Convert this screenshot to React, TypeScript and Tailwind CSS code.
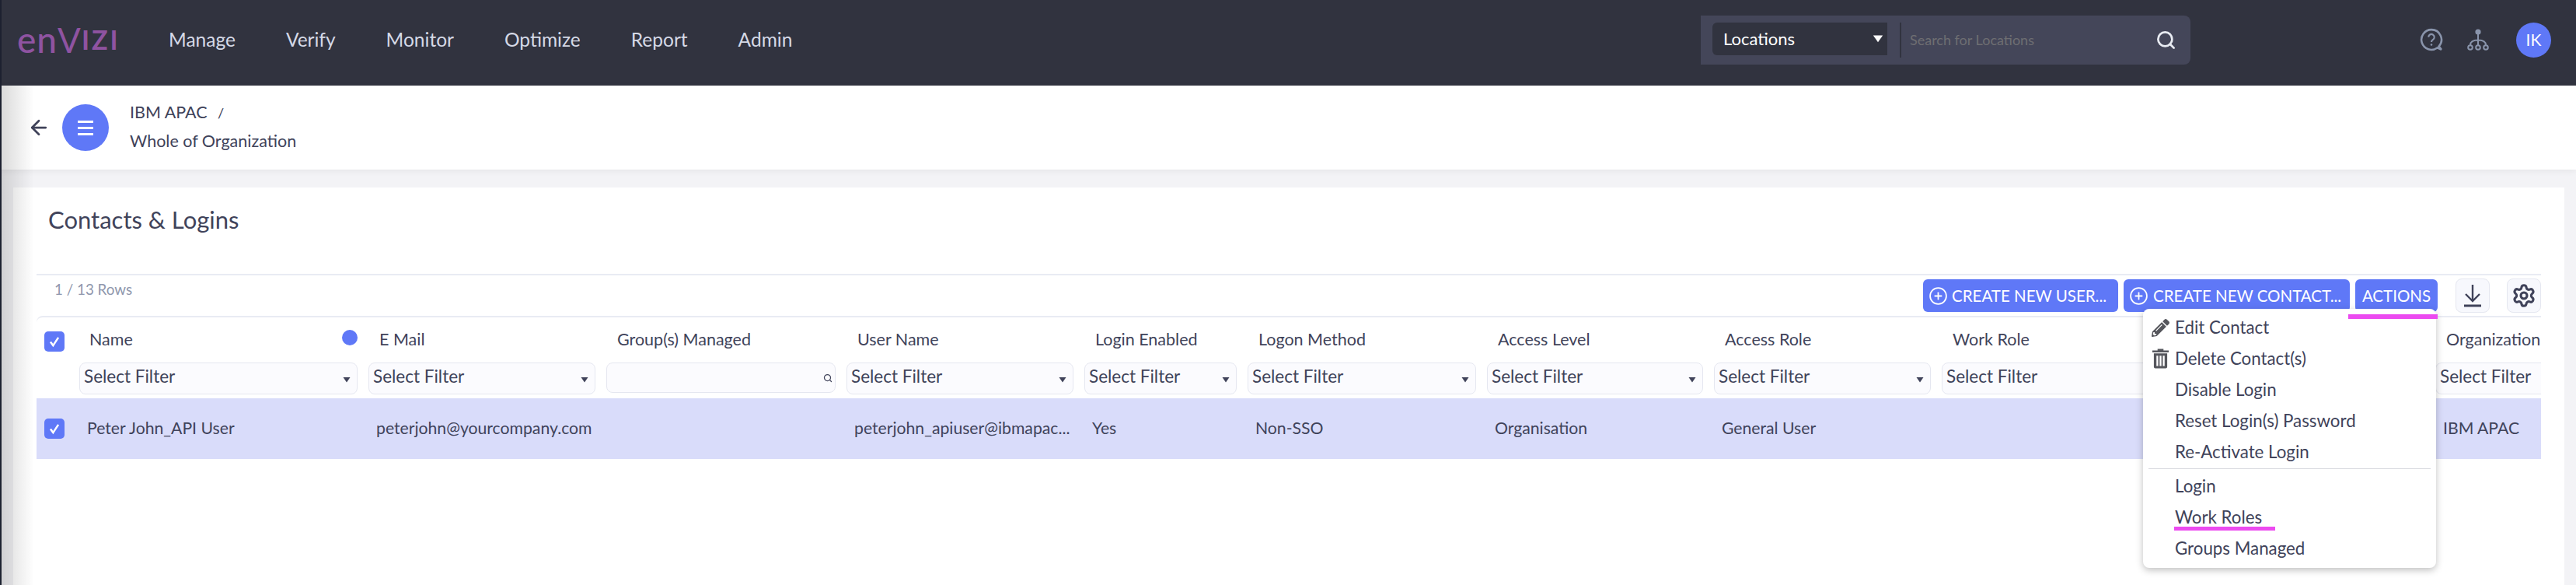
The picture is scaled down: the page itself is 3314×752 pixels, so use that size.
import { ArrowLeft, CirclePlus, Search, Settings } from "lucide-react"
import { FaPencilAlt } from "react-icons/fa"

const GRID = "grid grid-cols-[48px_372px_306px_309px_306px_210px_308px_292px_293px_309px_326px_260px]"

const nav = ["Manage", "Verify", "Monitor", "Optimize", "Report", "Admin"]

const columns = ["Group(s) Managed", "User Name", "Login Enabled", "Logon Method", "Access Level", "Access Role", "Work Role", "", "Organization"]

const rowValues = ["peterjohn@yourcompany.com", "", "peterjohn_apiuser@ibmapac...", "Yes", "Non-SSO", "Organisation", "General User", "", "", "IBM APAC"]

function Caret({ className }: { className: string }) {
  return (
    <svg viewBox="0 0 10 8" className={className} fill="currentColor">
      <path d="M0.5 1h9L5 7.5z" />
    </svg>
  )
}

function Check() {
  return (
    <span className="flex h-[26px] w-[26px] items-center justify-center rounded-[5px] bg-[#5f78f7]">
      <svg viewBox="0 0 16 16" className="h-[18px] w-[18px]" fill="none" stroke="white" strokeWidth="2.2">
        <path d="M3.5 8.5l3 4 6-9" />
      </svg>
    </span>
  )
}

function Filter() {
  return (
    <div className="flex h-[41px] items-center justify-between rounded-[8px] border border-[#e5e7f0] bg-[#fbfbfe] pr-[8px] pl-[5px] text-[#40435a]">
      <span className="-mt-[5px] text-[22.5px] whitespace-nowrap">Select Filter</span>
      <Caret className="mt-[2px] h-[8px] w-[10px] shrink-0" />
    </div>
  )
}

function SearchFilter() {
  return (
    <div className="flex h-[39px] items-center justify-end rounded-[8px] border border-[#e5e7f0] bg-[#fbfbfe] pr-[3px] text-[#40435a]">
      <Search size={12} strokeWidth={2.5} />
    </div>
  )
}

function TrashIcon() {
  return (
    <svg viewBox="0 0 22 26" className="h-[26px] w-[21px] text-[#55565c]" fill="currentColor">
      <path d="M7 0h8v2h7v2.5H0V2h7z" />
      <path d="M2 6h18v18a2 2 0 0 1-2 2H4a2 2 0 0 1-2-2zM5.500 9v14h2.400V9zm4.300 0v14h2.400V9zm4.300 0v14h2.400V9z" fillRule="evenodd" />
    </svg>
  )
}

function MenuItem({ icon, label }: { icon?: React.ReactNode; label: string }) {
  return (
    <div className="relative flex h-[40px] items-center pl-[41px] text-[22.3px] whitespace-nowrap text-[#40435a]">
      {icon && <span className="absolute left-[10px] flex w-[24px] justify-center">{icon}</span>}
      {label}
    </div>
  )
}

export default function App() {
  return (
    <div className="relative h-[752px] w-[3314px] overflow-hidden bg-[#f3f3f6] font-['Lato',sans-serif] text-[21.5px] text-[#40435a]">

      {/* TOP NAV */}
      <header className="flex h-[110px] items-center bg-[#31333f] pb-[8px] pl-[22px]">
        <div className="flex h-[50px] w-[195px] items-center leading-none text-[#8f53a1]">
          <span className="text-[46px] font-medium tracking-[1px]">en</span>
          <span className="text-[44px]">V</span>
          <span className="ml-[1px] text-[34px] font-bold tracking-[3px]">IZI</span>
        </div>
        <nav className="flex gap-[65px] text-[24.500px] text-[#d5d9e6]">
          {nav.map((n) => (
            <span key={n}>{n}</span>
          ))}
        </nav>

        <div className="ml-auto flex h-[63px] w-[630px] items-start rounded-r-[8px] bg-[#444659] pt-[9px] pl-[15px]">
          <div className="flex h-[42px] w-[225px] items-center justify-between rounded-l-[6px] bg-[#31333f] pr-[5px] pl-[14px] text-[22px] text-white">
            Locations
            <Caret className="h-[11px] w-[14px]" />
          </div>
          <div className="ml-[16px] h-[45px] w-[2px] bg-[#31333f]" />
          <div className="flex h-[45px] flex-1 items-center justify-between pr-[18px] pl-[11px] text-[#6e6e72]">
            <span className="text-[18px]">Search for Locations</span>
            <Search size={27} strokeWidth={2.4} className="text-[#e8ebf2]" />
          </div>
        </div>

        <div className="ml-[295px] flex items-center pr-[32px]">
          <svg viewBox="0 0 28 28" className="h-[30px] w-[30px] text-[#8994ab]" fill="none" stroke="currentColor" strokeWidth="2.400">
            <path d="M14 2a12 12 0 1 0 7 21.750L26 26l-3-4A12 12 0 0 0 14 2z" />
            <path d="M10.500 11a3.500 3.500 0 1 1 5.400 2.900c-1.300 .9-1.900 1.500-1.900 2.800" strokeWidth="2" />
            <circle cx="14" cy="20" r="1.200" fill="currentColor" stroke="none" />
          </svg>
          <svg viewBox="0 0 28 28" className="ml-[31px] h-[28px] w-[28px] text-[#8994ab]" fill="none" stroke="currentColor" strokeWidth="2">
            <circle cx="14" cy="4" r="3.600" fill="currentColor" stroke="none" />
            <path d="M14 7v14M4 21c0-5 4-6.500 10-6.500S24 16 24 21" />
            <circle cx="4" cy="24" r="2.800" />
            <circle cx="14" cy="24" r="2.800" />
            <circle cx="24" cy="24" r="2.800" />
          </svg>
          <div className="ml-[35px] flex h-[45px] w-[45px] items-center justify-center rounded-full bg-[#5f78f7] text-[21px] text-white">IK</div>
        </div>
      </header>

      {/* BREADCRUMB */}
      <div className="flex h-[108px] items-center bg-white pl-[35px] shadow-[0_2px_8px_rgba(0,0,0,0.06)]">
        <ArrowLeft size={30} strokeWidth={2.2} className="text-[#40435a]" />
        <div className="ml-[15px] flex h-[60px] w-[60px] flex-col items-center justify-center gap-[5px] rounded-full bg-[#5f78f7]">
          <span className="h-[3px] w-[20px] bg-white" />
          <span className="h-[3px] w-[20px] bg-white" />
          <span className="h-[3px] w-[20px] bg-white" />
        </div>
        <div className="-mt-[3px] ml-[27px] flex flex-col gap-[12px] text-[21.500px] leading-[24px]">
          <span>
            IBM APAC <span className="ml-[8px] text-[18px]">/</span>
          </span>
          <span>Whole of Organization</span>
        </div>
      </div>

      {/* CARD */}
      <main className="mt-[23px] mr-[15px] ml-[17px] h-[520px] bg-white px-[30px] pt-[22px]">
        <h1 className="pl-[15px] text-[31px] leading-[38px]">Contacts &amp; Logins</h1>

        <div className="relative mt-[51px]">
          {/* toolbar */}
          <div className="flex h-[54px] items-start justify-between border-t-2 border-[#e9ebf3]">
            <span className="mt-[4px] ml-[23px] text-[18.800px] text-[#8f97ad]">1 / 13 Rows</span>
            <div className="mt-[4px] flex items-center text-[20.500px] text-white">
              <button className="flex h-[42px] w-[251px] items-center gap-[5px] rounded-[6px] bg-[#5f78f7] pl-[7px] whitespace-nowrap">
                <CirclePlus size={25} strokeWidth={1.7} />
                CREATE NEW USER...
              </button>
              <button className="ml-[7px] flex h-[42px] w-[291px] items-center gap-[6px] rounded-[6px] bg-[#5f78f7] pl-[7px] whitespace-nowrap">
                <CirclePlus size={25} strokeWidth={1.7} />
                CREATE NEW CONTACT...
              </button>
              <button className="ml-[7px] h-[42px] w-[106px] rounded-[6px] bg-[#5f78f7]">ACTIONS</button>
              <button className="ml-[23px] flex h-[44px] w-[44px] items-center justify-center rounded-[8px] border border-[#e5e7f0] bg-[#f7f8fd] text-[#40435a]">
                <svg viewBox="0 0 24 30" className="h-[30px] w-[24px]" fill="none" stroke="currentColor" strokeWidth="2.4">
                  <path d="M12 1v20M3 13l9 9 9-9" />
                  <path d="M1 28h22" strokeWidth="3" />
                </svg>
              </button>
              <button className="ml-[22px] flex h-[44px] w-[44px] items-center justify-center rounded-[8px] border border-[#e5e7f0] bg-[#f7f8fd] text-[#40435a]">
                <Settings size={32} strokeWidth={2.3} />
              </button>
            </div>
          </div>

          {/* table */}
          <div className="overflow-hidden rounded-tl-[8px] border-t-2 border-[#e9ebf3]">
            <div className={`${GRID} h-[104px]`}>
              <div className="pt-[18px] pl-[10px]">
                <Check />
              </div>
              <div className="px-[7px]">
                <div className="flex h-[58px] items-start justify-between pt-[12px] pl-[13px]">
                  <span>Name</span>
                  <span className="mt-[4px] h-[20px] w-[20px] rounded-full bg-[#5f78f7]" />
                </div>
                <Filter />
              </div>
              <div className="px-[7px]">
                <div className="h-[58px] pt-[12px] pl-[14px]">E Mail</div>
                <Filter />
              </div>
              {columns.map((c, i) => (
                <div key={i} className="px-[7px]">
                  <div className="h-[58px] pt-[12px] pl-[14px] whitespace-nowrap">{c}</div>
                  {c === "" ? null : i === 0 ? <SearchFilter /> : <Filter />}
                </div>
              ))}
            </div>

            <div className={`${GRID} h-[78px] items-center bg-[#d9dcfa] text-[21.2px]`}>
              <div className="pl-[10px]">
                <Check />
              </div>
              <div className="pl-[17px]">Peter John_API User</div>
              {rowValues.map((v, i) => (
                <div key={i} className="pl-[17px] whitespace-nowrap">{v}</div>
              ))}
            </div>
          </div>

          {/* actions menu */}
          <div className="absolute top-[45px] left-[2710px] w-[377px] rounded-[8px] bg-white pt-[4px] shadow-[0_3px_10px_rgba(0,0,0,0.25)]">
            <MenuItem icon={<FaPencilAlt size={23} className="text-[#55565c]" />} label="Edit Contact" />
            <MenuItem icon={<TrashIcon />} label="Delete Contact(s)" />
            <MenuItem label="Disable Login" />
            <MenuItem label="Reset Login(s) Password" />
            <MenuItem label="Re-Activate Login" />
            <div className="mx-[7px] mt-[1px] mb-[2px] h-[1px] bg-[#d8d9de]" />
            <MenuItem label="Login" />
            <MenuItem label="Work Roles" />
            <MenuItem label="Groups Managed" />
            <div className="h-[5px]" />
          </div>

          {/* pink annotations */}
          <div className="absolute top-[52px] left-[2974px] h-[6px] w-[115px] bg-[#ec4af0]" />
          <div className="absolute top-[325px] left-[2750px] h-[5px] w-[130px] bg-[#ec4af0]" />
        </div>
      </main>

      {/* left edge shade */}
      <div className="absolute top-[110px] bottom-0 left-0 w-[44px] bg-gradient-to-r from-black/15 to-transparent" />
      <div className="absolute top-0 bottom-0 left-0 w-[2px] bg-[#1d2130]" />
    </div>
  )
}
